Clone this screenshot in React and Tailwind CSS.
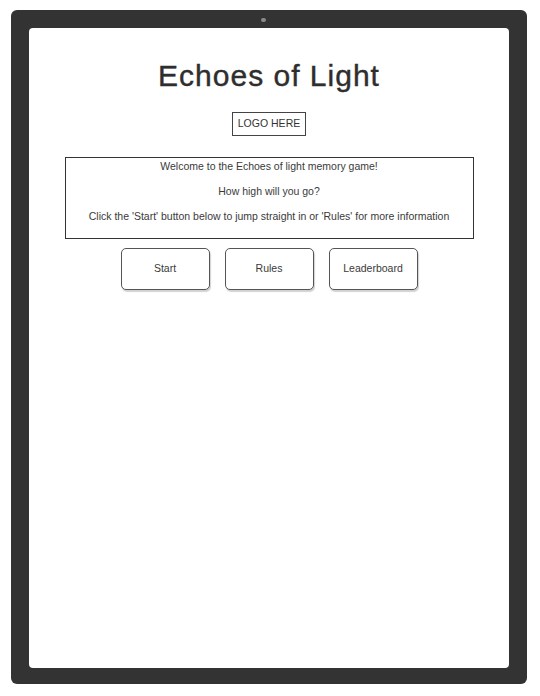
import React from 'react';

const font = { fontFamily: '"Liberation Sans", Arial, sans-serif' };

export default function App() {
  const buttons = ['Start', 'Rules', 'Leaderboard'];

  return (
    <div className="w-[540px] h-[696px] bg-white pt-[10px] pl-[11px]" style={font}>
      {/* Tablet frame */}
      <div className="w-[516px] h-[674px] bg-[#333333] rounded-[6px] flex flex-col pt-[8px] px-[18px]">
        <div className="w-[5px] h-[4px] rounded-full bg-[#8a8a8a] ml-[232px]"></div>

        {/* Screen */}
        <div className="mt-[6px] w-[480px] h-[640px] bg-white rounded-[4px] flex flex-col items-center pt-[30px]">
          <h1 className="text-[30px] leading-[36px] tracking-[1px] text-[#2e2e2e] font-normal [-webkit-text-stroke:0.4px_#2e2e2e]">Echoes of Light</h1>

          <div className="mt-[18px] w-[74px] h-[24px] border-[1.5px] border-[#444444] flex items-center justify-center text-[10.5px] text-[#333333]">
            LOGO HERE
          </div>

          <div className="mt-[21px] w-[409px] h-[82px] border-[1.5px] border-[#333333] pt-[2px] flex flex-col items-center gap-[12px] text-[10.5px] leading-[13px] text-[#3a3a3a]">
            <p>Welcome to the Echoes of light memory game!</p>
            <p>How high will you go?</p>
            <p>Click the 'Start' button below to jump straight in or 'Rules' for more information</p>
          </div>

          <div className="mt-[9px] flex gap-[15px]">
            {buttons.map((b) => (
              <button
                key={b}
                className="w-[89px] h-[42px] rounded-[5px] border-[1.5px] border-[#555555] bg-white text-[10.5px] text-[#3a3a3a] shadow-[1px_2px_1px_rgba(0,0,0,0.18)]"
                style={font}
              >
                {b}
              </button>
            ))}
          </div>
        </div>
      </div>
    </div>
  );
}
